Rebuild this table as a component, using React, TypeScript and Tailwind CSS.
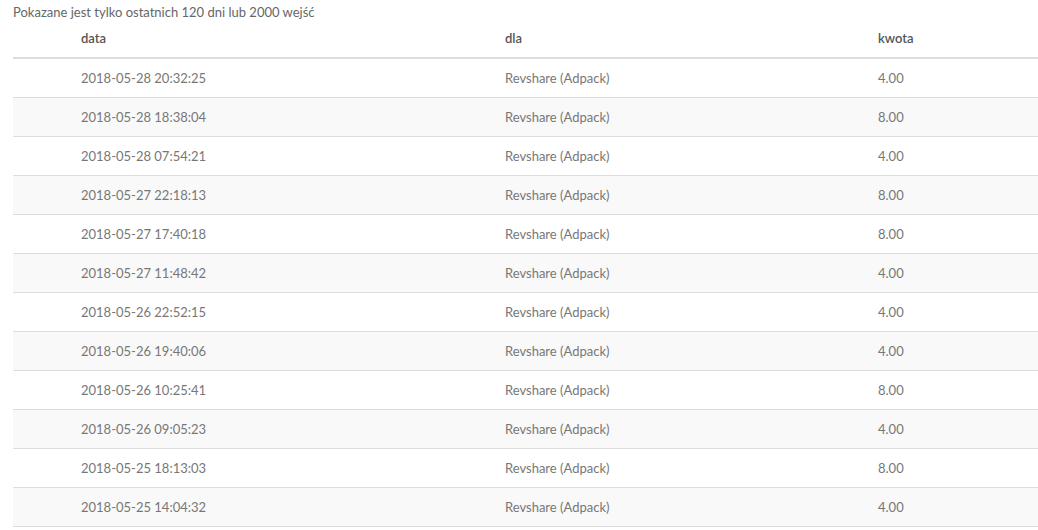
const rows = [
  ['2018-05-28 20:32:25', '4.00'],
  ['2018-05-28 18:38:04', '8.00'],
  ['2018-05-28 07:54:21', '4.00'],
  ['2018-05-27 22:18:13', '8.00'],
  ['2018-05-27 17:40:18', '8.00'],
  ['2018-05-27 11:48:42', '4.00'],
  ['2018-05-26 22:52:15', '4.00'],
  ['2018-05-26 19:40:06', '4.00'],
  ['2018-05-26 10:25:41', '8.00'],
  ['2018-05-26 09:05:23', '4.00'],
  ['2018-05-25 18:13:03', '8.00'],
  ['2018-05-25 14:04:32', '4.00'],
];

export default function App() {
  return (
    <div className="w-[1038px] bg-white font-['Lato','Liberation_Sans',sans-serif] text-[13px] leading-[18px]">
      <p className="pl-[13px] pt-[3px] text-[#666]">Pokazane jest tylko ostatnich 120 dni lub 2000 wejść</p>
      <div className="ml-[13px]">
        <div className="grid grid-cols-[424px_373px_1fr] pl-[68px] pt-[8px] pb-[10px] border-b-2 border-[#ddd] font-semibold text-[#555]">
          <div>data</div>
          <div>dla</div>
          <div>kwota</div>
        </div>
        {rows.map((r, i) => (
          <div
            key={i}
            className={
              'grid grid-cols-[424px_373px_1fr] pl-[68px] pt-[10px] pb-[10px] h-[39px] border-b border-[#ddd] text-[#777] ' +
              (i % 2 === 1 ? 'bg-[#f9f9f9]' : 'bg-white')
            }
          >
            <div>{r[0]}</div>
            <div>Revshare (Adpack)</div>
            <div>{r[1]}</div>
          </div>
        ))}
      </div>
    </div>
  );
}
